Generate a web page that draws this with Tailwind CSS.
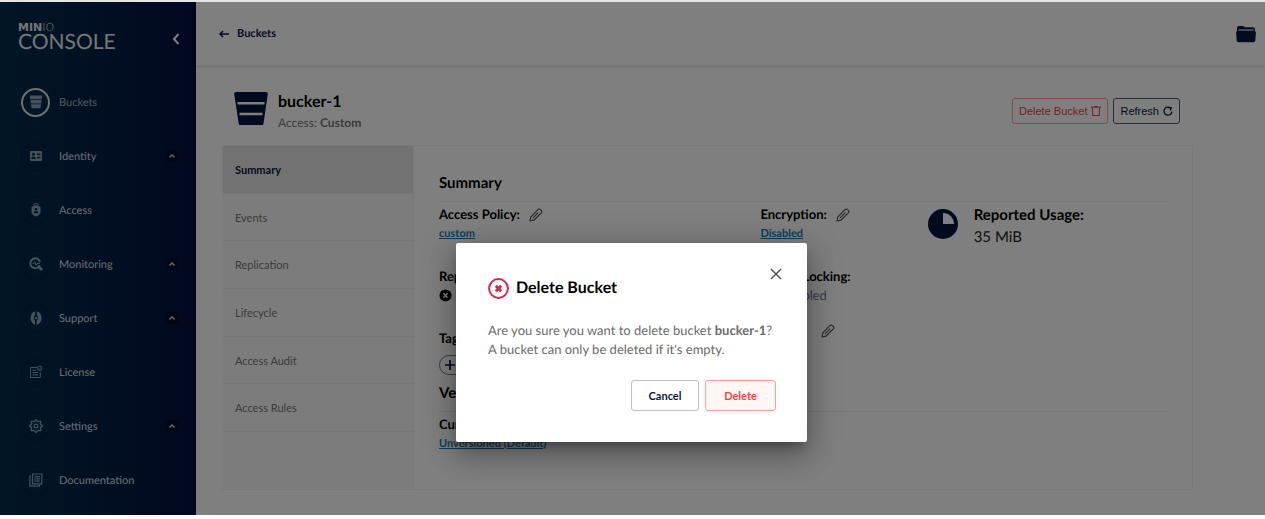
<!DOCTYPE html>
<html lang="en">
<head>
<meta charset="utf-8">
<meta name="viewport" content="width=device-width, initial-scale=1">
<title>MinIO Console</title>
<script src="https://cdn.jsdelivr.net/npm/@tailwindcss/browser@4"></script>
</head>
<body class="bg-white font-['Lato',sans-serif] text-[13px] leading-[19px] text-black antialiased [text-rendering:geometricPrecision]">
<svg class="hidden" aria-hidden="true">
  <symbol id="pencil" viewBox="0 0 14 14"><path d="M1 13l.7-3.900L8.900 1.700a1.800 1.800 0 0 1 2.600-.1l.8.800a1.800 1.800 0 0 1 0 2.500L4.900 12.200zM4.300 9.700l4.600-4.800" fill="none" stroke="currentColor" stroke-width="1.200" stroke-linejoin="round" stroke-linecap="round"/></symbol>
  <symbol id="up" viewBox="0 0 12 12"><path d="M3.500 7.500L6 5l2.500 2.500" fill="none" stroke="currentColor" stroke-width="1.300"/></symbol>
  <symbol id="off" viewBox="0 0 14 14"><circle cx="7" cy="7" r="6.500" fill="currentColor"/><path d="M4.700 4.500l4.600 5M9.300 4.500l-4.600 5" stroke="#fff" stroke-width="1.500"/></symbol>
</svg>
<div class="relative flex min-h-[515px] border-t-2 border-[#e4e6e8]">
  <aside class="w-[196px] shrink-0 bg-linear-to-r from-[#042c4a] to-[#041040] text-[11px] text-[#d5dbe2]">
    <div class="flex h-[73px] items-center justify-between pl-[18px] pr-[14px]">
      <div class="pb-1 text-[#e8ebee]">
        <div class="font-['DejaVu_Sans',sans-serif] text-[11px] leading-[9px]"><span class="font-bold">MIN</span><span class="font-extralight">IO</span></div>
        <div class="text-[21px] leading-[19px]">CONSOLE</div>
      </div>
      <button type="button" aria-label="Collapse menu" class="text-white"><svg class="size-3" viewBox="0 0 12 12"><path d="M8.500 1L4 6l4.500 5" fill="none" stroke="currentColor" stroke-width="2"/></svg></button>
    </div>
    <nav>
      <a href="#" class="flex h-[54px] items-center pl-[21px] pr-[18px]">
        <span class="mr-[9px] flex size-[29px] items-center justify-center rounded-full border-2 border-[#dce2e8] bg-[#002a4b] text-[#8fa3b3]"><svg class="size-[14px]" viewBox="0 0 14 14" fill="currentColor"><path d="M.8.500h12.400l-.4 3.700H1.200zM1.400 5h11.200l-.4 3.500H1.800zM2 9.300h10l-.4 4H2.500z"/></svg></span>
        <span class="text-[#a4b0bc]">Buckets</span>
      </a>
      <a href="#" class="flex h-[54px] items-center pl-[21px] pr-[18px]">
        <span class="mr-[9px] flex size-[29px] items-center justify-center rounded-full border border-[#041f3a] bg-[#00294a] text-[#8fa3b3]"><svg class="size-[14px]" viewBox="0 0 14 14"><rect x="1" y="2" width="12" height="10" rx="1" fill="currentColor"/><g fill="#002a4b"><circle cx="4.500" cy="5.300" r="1.500"/><path d="M2.200 10c0-3.500 4.600-3.500 4.600 0zM8 4.500h3.500v1.600H8zM8 7.700h3.500v1.600H8z"/></g></svg></span>
        <span>Identity</span><svg class="ml-auto size-3 bg-[#040d2c]"><use href="#up"/></svg>
      </a>
      <a href="#" class="flex h-[54px] items-center pl-[21px] pr-[18px]">
        <span class="mr-[9px] flex size-[29px] items-center justify-center rounded-full border border-[#041f3a] bg-[#00294a] text-[#8fa3b3]"><svg class="size-[14px]" viewBox="0 0 14 14"><path d="M5 3V2.200a2 2 0 0 1 4 0V3" fill="none" stroke="currentColor"/><path d="M2.500 4L7 2.200 11.500 4v5c0 2-2.200 3.500-4.500 4.500C4.700 12.500 2.500 11 2.500 9z" fill="currentColor"/><g fill="#002a4b"><circle cx="7" cy="6" r="1.300"/><path d="M4.600 10.200c0-3.400 4.800-3.400 4.800 0z"/></g></svg></span>
        <span>Access</span>
      </a>
      <a href="#" class="flex h-[54px] items-center pl-[21px] pr-[18px]">
        <span class="mr-[9px] flex size-[29px] items-center justify-center rounded-full border border-[#041f3a] bg-[#00294a] text-[#8fa3b3]"><svg class="size-[14px]" viewBox="0 0 14 14" fill="none" stroke="currentColor"><path d="M10.800 8A4.900 4.900 0 1 1 11 5" stroke-width="2"/><path d="M9.500 9.500l3.500 3.500" stroke-width="2.600"/><path d="M3.500 6.500h1.300l1-1.800 1.200 3.600 1-1.800h2.800"/></svg></span>
        <span>Monitoring</span><svg class="ml-auto size-3 bg-[#040d2c]"><use href="#up"/></svg>
      </a>
      <a href="#" class="flex h-[54px] items-center pl-[21px] pr-[18px]">
        <span class="mr-[9px] flex size-[29px] items-center justify-center rounded-full border border-[#041f3a] bg-[#00294a] text-[#8fa3b3]"><svg class="size-[14px]" viewBox="0 0 14 14"><path d="M6 .4v3.800C4.400 5 4.400 8.500 6 9.500v4.200C3.300 13 1.600 10 1.600 7c0-3.200 1.700-6 4.400-6.600zM7.800.4c3 .4 4.800 3.200 4.800 6.600 0 3.500-2.200 6.300-5 6.700V9.800C9.400 8.700 9.400 5 7.800 4.200z" fill="currentColor"/><circle cx="7" cy="7" r="1.200" fill="currentColor"/></svg></span>
        <span>Support</span><svg class="ml-auto size-3 bg-[#040d2c]"><use href="#up"/></svg>
      </a>
      <a href="#" class="flex h-[54px] items-center pl-[21px] pr-[18px]">
        <span class="mr-[9px] flex size-[29px] items-center justify-center rounded-full border border-[#041f3a] bg-[#00294a] text-[#8fa3b3]"><svg class="size-[14px]" viewBox="0 0 14 14" fill="none" stroke="currentColor"><path d="M8 2.500H1.500v10h9.800V7.200"/><circle cx="10.700" cy="3.400" r="2.300"/><path d="M9.700 3.400l.8.800 1.300-1.500M3.500 5.300h3.700M3.500 7.600h5.700M3.500 9.900h5.700"/></svg></span>
        <span>License</span>
      </a>
      <a href="#" class="flex h-[54px] items-center pl-[21px] pr-[18px]">
        <span class="mr-[9px] flex size-[29px] items-center justify-center rounded-full border border-[#041f3a] bg-[#00294a] text-[#8fa3b3]"><svg class="size-[14px]" viewBox="0 0 14 14" fill="none" stroke="currentColor" stroke-width="1.200" stroke-linejoin="round"><path d="M5.800 2.300L6.200.8h1.600l.4 1.500 1.300.5 1.400-.8 1.100 1.100-.8 1.400.5 1.300 1.500.4v1.600l-1.500.4-.5 1.300.8 1.400-1.100 1.100-1.400-.8-1.300.5-.4 1.500H6.200l-.4-1.500-1.300-.5-1.400.8L2 10.900l.8-1.400-.5-1.300-1.500-.4V6.200l1.500-.4.5-1.300L2 3.100 3.100 2l1.400.8z"/><circle cx="7" cy="7" r="1.900"/></svg></span>
        <span>Settings</span><svg class="ml-auto size-3 bg-[#040d2c]"><use href="#up"/></svg>
      </a>
      <a href="#" class="flex h-[54px] items-center pl-[21px] pr-[18px]">
        <span class="mr-[9px] flex size-[29px] items-center justify-center rounded-full border border-[#041f3a] bg-[#00294a] text-[#8fa3b3]"><svg class="size-[14px]" viewBox="0 0 14 14" fill="none" stroke="currentColor"><path d="M3.500 1h9.300v9.800H3.500zM2 3.200H.9v10h9.600v-1.100M5.300 3.700H11M5.300 5.900H11M5.300 8.100H11" stroke-width="1.200"/></svg></span>
        <span>Documentation</span>
      </a>
    </nav>
  </aside>

  <main class="min-w-0 flex-1 bg-white">
    <header class="flex h-16 items-center justify-between border-b border-[#f0f0f0] pl-[23px] pr-[9px] shadow-sm">
      <a href="#" class="flex items-center gap-2 text-[11px] font-bold text-[#07193e]"><svg class="size-[10px]" viewBox="0 0 10 10"><path d="M10 5H1.500M4 2L1 5l3 3" fill="none" stroke="currentColor" stroke-width="1.500"/></svg>Buckets</a>
      <button type="button" aria-label="Object manager" class="text-[#07193e]"><svg class="h-[18px] w-5" viewBox="0 0 20 18" fill="currentColor"><path d="M1 6V2.800Q1 1 2.700 1h4.500l1.600 1.300h8Q19 2.300 19 4v2z"/><path d="M1.600 6h16.800q1.600 0 1.500 1.600l-.6 8q-.1 1.600-1.700 1.600H2.400q-1.600 0-1.700-1.600L.1 7.600Q0 6 1.600 6z"/><path d="M2.300 4.300h15.400v1.500H2.300z" fill="#b8b8c0"/></svg></button>
    </header>

    <div class="pl-[26px] pr-[72px] pt-[25px]">
      <div class="flex h-[54px] items-start justify-between pl-3 pr-[13px]">
        <div class="flex">
          <svg class="mr-[10px] h-[34px] w-[34px] text-[#05143f]" viewBox="0 0 34 34"><path d="M2 1h30q2 0 1.800 2L29.500 32.500q-.3 2-2.300 2H7q-2 0-2.300-2L.2 3Q0 1 2 1z" fill="currentColor"/><path d="M3.500 12.200h27M5.500 23h23" stroke="#fff" stroke-width="2.400"/></svg>
          <div>
            <h1 class="text-[16px] font-bold leading-[22px]">bucker-1</h1>
            <p class="text-[12px] leading-5 text-[#777]">Access: <b>Custom</b></p>
          </div>
        </div>
        <div class="mt-[7px] flex gap-[5px] font-['Liberation_Sans',Arial,sans-serif] text-[11px]">
          <button type="button" class="flex h-[26px] items-center gap-1 rounded-[3px] border border-[#ff9b95] px-[6px] text-[#e8453e]">Delete Bucket <svg class="size-[10px]" viewBox="0 0 10 10"><path d="M0 1.200h10M1.500 1.500v8h7v-8M3 .6h4" fill="none" stroke="currentColor"/></svg></button>
          <button type="button" class="flex h-[26px] items-center gap-1 rounded-[3px] border border-[#4d5b80] px-[6px] text-[#07193e]">Refresh <svg class="size-[10px]" viewBox="0 0 10 10"><path d="M7.500 2A4 4 0 1 0 9 5.600M4.800 1.700h3.400L7.400 4.500" fill="none" stroke="currentColor" stroke-width="1.300"/></svg></button>
        </div>
      </div>

      <section class="flex h-[345px] border border-[#f2f2f2]">
        <div class="w-[191px] shrink-0 border-r border-[#f2f2f2] bg-[#f9f9f9] text-[11px] text-[#777]">
          <div class="flex h-[286px] flex-col">
            <button type="button" class="flex-1 border-b border-[#eee] bg-[#e5e5e5] pl-3 text-left font-bold text-[#07193e]">Summary</button>
            <button type="button" class="flex-1 border-b border-[#eee] pl-3 text-left">Events</button>
            <button type="button" class="flex-1 border-b border-[#eee] pl-3 text-left">Replication</button>
            <button type="button" class="flex-1 border-b border-[#eee] pl-3 text-left">Lifecycle</button>
            <button type="button" class="flex-1 border-b border-[#eee] pl-3 text-left">Access Audit</button>
            <button type="button" class="flex-1 border-b border-[#eee] pl-3 text-left">Access Rules</button>
          </div>
        </div>
        <div class="flex-1 pl-[25px] pr-6 pt-[27px]">
          <h2 class="border-b border-[#eee] pb-2 text-[15px] font-bold leading-5">Summary</h2>
          <div class="grid grid-cols-[321fr_167fr_240fr] pt-[3px]">
            <div>
              <div class="flex items-center font-bold">Access Policy:<button type="button" aria-label="Edit access policy" class="ml-[9px] text-[#555]"><svg class="size-[14px]"><use href="#pencil"/></svg></button></div>
              <a href="#" class="block text-[11px] font-bold leading-[19px] text-[#1c7cb0] underline">custom</a>
              <div class="mt-6 font-bold">Replication:</div>
              <div class="flex items-center gap-1 text-[#777]"><svg class="size-[13px] text-black"><use href="#off"/></svg>Disabled</div>
              <div class="mt-6 font-bold">Tags:</div>
              <button type="button" class="mt-[7px] flex h-5 items-center gap-1 rounded-full border border-[#777c99] px-[5px] text-[11px] text-[#07193e]"><svg class="size-[10px]" viewBox="0 0 10 10"><path d="M5 0v10M0 5h10" stroke="currentColor" stroke-width="1.700"/></svg>Add tag</button>
            </div>
            <div>
              <div class="flex items-center font-bold">Encryption:<button type="button" aria-label="Edit encryption" class="ml-[9px] text-[#555]"><svg class="size-[14px]"><use href="#pencil"/></svg></button></div>
              <a href="#" class="block text-[11px] font-bold leading-[19px] text-[#1c7cb0] underline">Disabled</a>
              <div class="mt-6 font-bold">Object Locking:</div>
              <div class="flex items-center gap-1 text-[#6c7a90]"><svg class="size-[13px] text-black"><use href="#off"/></svg>Disabled</div>
              <div class="mt-4 flex items-center font-bold"><span class="w-[52px]">Quota:</span><button type="button" aria-label="Edit quota" class="ml-[9px] text-[#555]"><svg class="size-[14px]"><use href="#pencil"/></svg></button></div>
            </div>
            <div class="flex items-start text-[15px] leading-[22px]">
              <svg class="mr-4 mt-1 size-[30px]" viewBox="0 0 30 30"><circle cx="15" cy="15" r="15" fill="#05143f"/><path d="M15 15V4a11 11 0 0 1 11 11z" fill="#fff"/></svg>
              <div class="-mt-px"><div class="font-bold">Reported Usage:</div><div class="text-[#222]">35 MiB</div></div>
            </div>
          </div>
          <h2 class="mb-[3px] mt-2 border-b border-[#eee] pb-2 text-[15px] font-bold leading-5">Versioning</h2>
          <div class="font-bold">Current Status:</div>
          <a href="#" class="block text-[11px] font-bold leading-[19px] text-[#1c7cb0] underline">Unversioned (Default)</a>
        </div>
      </section>
    </div>
  </main>

  <div class="absolute inset-0 flex items-start justify-center bg-black/50 pr-[2px] pt-[241px]">
    <div role="dialog" aria-modal="true" aria-labelledby="dlg-title" class="w-[351px] rounded-[2px] bg-white pb-[31px] pl-8 pr-[31px] pt-[25px] shadow-[0_7px_10px_-4px_rgba(0,0,0,0.3),0_14px_28px_2px_rgba(0,0,0,0.2),0_5px_34px_5px_rgba(0,0,0,0.15)]">
      <div class="flex items-start justify-between">
        <h2 id="dlg-title" class="mt-[9px] flex items-center gap-[7px] text-[16px] font-bold leading-[22px]"><svg class="size-[21px]" viewBox="0 0 21 21"><circle cx="10.500" cy="10.500" r="9.400" fill="none" stroke="#cf2a4b" stroke-width="2"/><path d="M7.800 7.800l5.400 5.400M13.200 7.800l-5.400 5.400" stroke="#cf2a4b" stroke-width="2.900"/></svg>Delete Bucket</h2>
        <button type="button" aria-label="Close" class="-mr-[6px] text-[#555]"><svg class="size-3" viewBox="0 0 12 12"><path d="M1 1l10 10M11 1L1 11" stroke="currentColor" stroke-width="1.500"/></svg></button>
      </div>
      <p class="mt-[22px] whitespace-nowrap text-[#6b6b6b]">Are you sure you want to delete bucket <b>bucker-1</b>?<br>A bucket can only be deleted if it's empty.</p>
      <div class="mt-[21px] flex justify-end gap-[6px] text-[11px] font-bold">
        <button type="button" class="h-[31px] w-[68px] rounded-[3px] border border-[#b9bfce] text-[#07193e]">Cancel</button>
        <button type="button" class="h-[31px] w-[71px] rounded-[3px] border border-[#ff9b95] bg-[#fff6f5] text-[#f5453d]">Delete</button>
      </div>
    </div>
  </div>
</div>
</body>
</html>
